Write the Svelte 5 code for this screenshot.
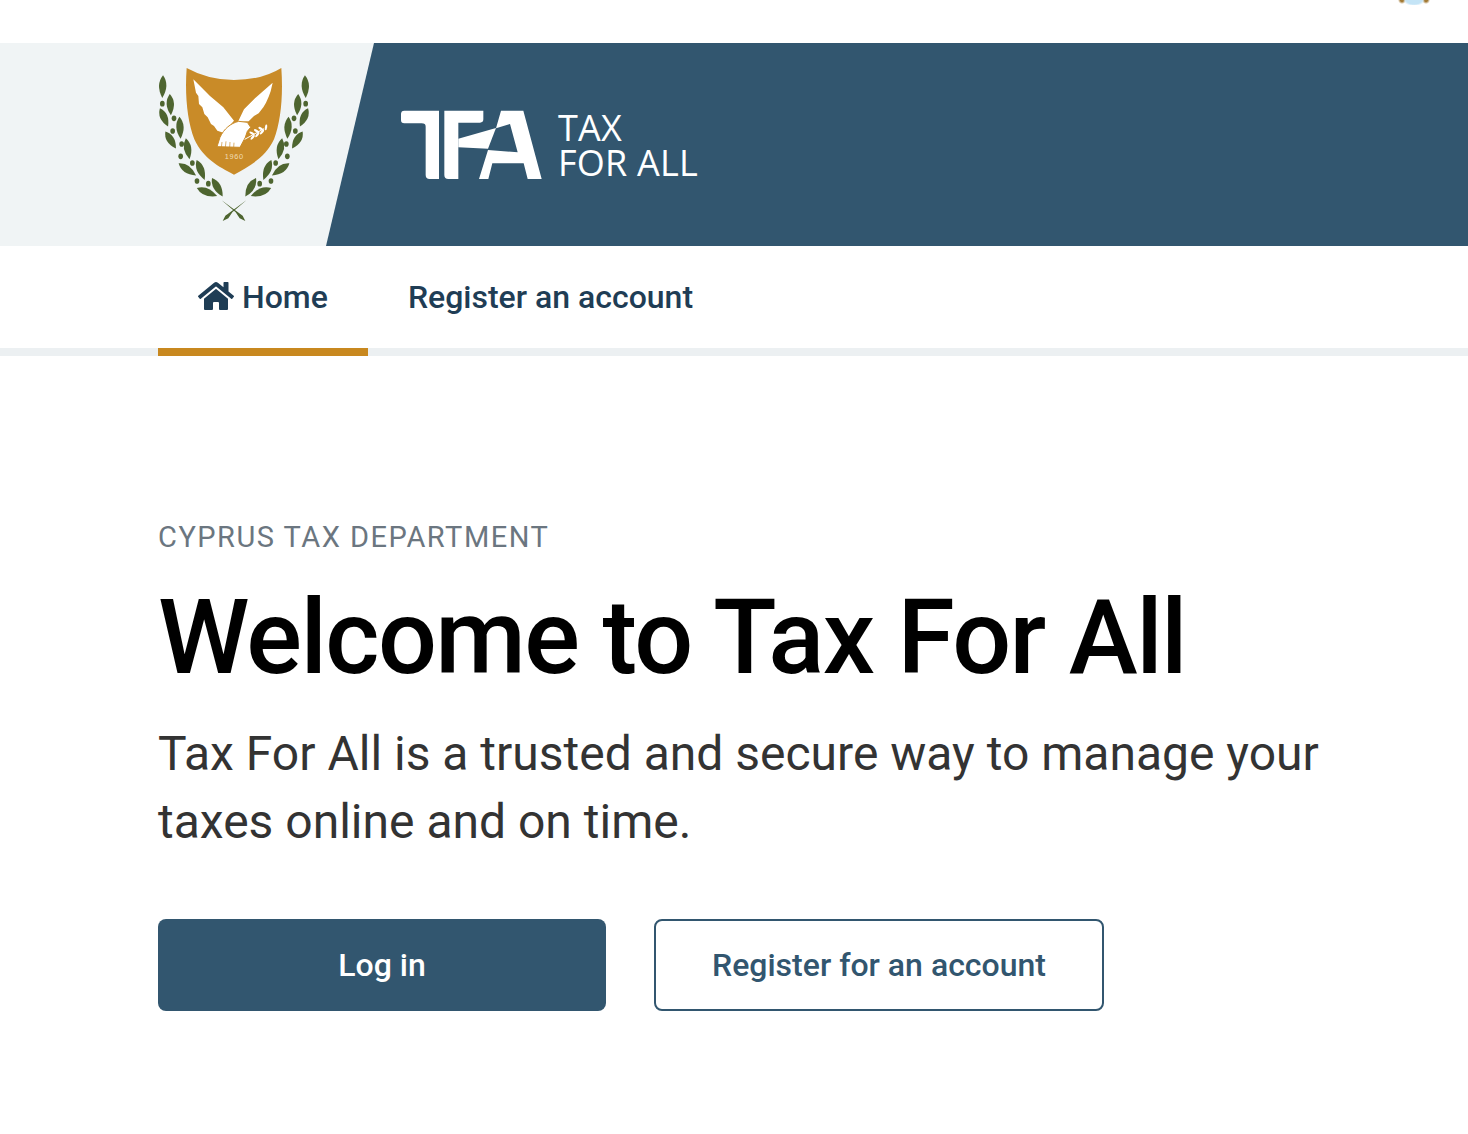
<script>
  const leaves = [
    [68, 110, 2, 34], [91, 164, -3, 32], [72, 202, -24, 30], [120, 233, -3, 33],
    [92, 270, -32, 30], [143, 296, -10, 32], [142, 358, -55, 32], [182, 360, -22, 32],
    [201, 426, -68, 33], [232, 412, -30, 32]
  ];
  const berries = [
    [67, 161], [102, 205], [98, 243], [125, 282], [122, 319], [157, 339], [171, 393], [205, 401]
  ];
  const sprigs = [
    [336, 250, -60], [350, 243, -60], [363, 236, -60], [338, 262, 40], [352, 254, 40], [366, 246, 40], [378, 232, 10]
  ];
</script>

<div class="page">
  <div class="topstrip">
    <span class="avatar"></span>
  </div>

  <header class="banner">
    <div class="crest-panel">
      <svg class="crest" viewBox="0 0 570 570" role="img" aria-label="Coat of arms of Cyprus">
        <defs>
          <g id="branch">
            {#each leaves as [x, y, r, l]}
              <path d="M0,{-l} Q22,{-l * 0.15} 0,{l} Q-22,{-l * 0.15} 0,{-l}Z" transform="translate({x} {y}) rotate({r})" fill="#4e6530" />
            {/each}
            {#each berries as [x, y]}
              <ellipse cx={x} cy={y} rx="7" ry="8.5" fill="#4e6530" />
            {/each}
            <path d="M244,450 L308,497 L316,513 L299,505 L287,487Z" fill="#4e6530" />
          </g>
        </defs>
        <path d="M140,54 Q205,90 282,90 Q365,90 424,54 C430,140 422,215 402,268 C375,325 325,350 282,374 C235,350 190,325 163,268 C142,215 134,135 140,54Z" fill="#c98b28" />
        <path d="M160,88 L210,138 L250,172 L282,212 L250,248 L232,242 L222,228 L213,222 L203,202 L193,192 L187,172 L177,162 L175,138 L168,128Z" fill="#fff" />
        <path d="M398,98 L345,145 L312,178 L294,215 L326,214 L342,198 L356,190 L370,172 L378,158 L386,140 L392,124Z" fill="#fff" />
        <path d="M296,214 C272,220 252,236 240,262 L231,290 L300,292 L316,262 L322,244 L332,232 L322,217Z" fill="#fff" stroke="#c98b28" stroke-width="3" />
        <path d="M246,276 L244,292 M258,274 L256,292 M270,276 L269,292 M282,278 L281,292" stroke="#c98b28" stroke-width="2" fill="none" />
        <path d="M314,268 L372,236" stroke="#fff" stroke-width="3" fill="none" />
        {#each sprigs as [x, y, r]}
          <ellipse cx={x} cy={y} rx="3.5" ry="9" transform="rotate({r} {x} {y})" fill="#fff" />
        {/each}
        <text x="283" y="327" class="year">1960</text>
        <use href="#branch" />
        <use href="#branch" transform="translate(564 0) scale(-1 1)" />
      </svg>
    </div>
    <div class="brand">
      <svg class="tfa" viewBox="0 0 465 270" role="img" aria-label="TFA logo">
        <path fill="#fff" d="M28,32 H132 V237 H104 Q92,237 92,225 V80 Q92,70 80,70 H28 Q18,70 18,60 V42 Q18,32 28,32Z" />
        <path fill="#fff" d="M148,32 H265 V58 Q265,68 255,68 H190 V237 H160 Q148,237 148,225Z" />
        <path fill="#fff" d="M190,116 L303,84 L279,146 L190,142Z" />
        <path fill="#fff" d="M318,32 H385 L440,237 H398 L386,190 H292 L280,237 H252 L279,150 L368,157 L345,72 L303,85Z" />
      </svg>
      <div class="wordmark">
        <span>TAX</span>
        <span>FOR ALL</span>
      </div>
    </div>
  </header>

  <nav class="nav">
    <a class="tab active" href="#home">
      <svg class="home-icon" viewBox="0 0 576 512" aria-hidden="true"><path fill="currentColor" d="M280.37 148.26L96 300.11V464a16 16 0 0 0 16 16l112.06-.29a16 16 0 0 0 15.92-16V368a16 16 0 0 1 16-16h64a16 16 0 0 1 16 16v95.64a16 16 0 0 0 16 16.05L464 480a16 16 0 0 0 16-16V300L295.67 148.26a12.19 12.19 0 0 0-15.3 0zM571.6 251.47L488 182.56V44.05a12 12 0 0 0-12-12h-56a12 12 0 0 0-12 12v72.61L318.47 43a48 48 0 0 0-61 0L4.34 251.47a12 12 0 0 0-1.6 16.9l25.5 31A12 12 0 0 0 45.15 301l235.22-193.74a12.19 12.19 0 0 1 15.3 0L530.9 301a12 12 0 0 0 16.9-1.6l25.5-31a12 12 0 0 0-1.7-16.93z"/></svg>
      Home
    </a>
    <a class="tab" href="#register">Register an account</a>
  </nav>

  <main class="hero">
    <p class="eyebrow">CYPRUS TAX DEPARTMENT</p>
    <h1>Welcome to Tax For All</h1>
    <p class="lead">Tax For All is a trusted and secure way to manage your taxes online and on time.</p>
    <div class="actions">
      <a class="btn primary" href="#login">Log in</a>
      <a class="btn secondary" href="#signup">Register for an account</a>
    </div>
  </main>
</div>

<style>
  :global(body) {
    margin: 0;
    background: #fff;
    font-family: Roboto, "Liberation Sans", sans-serif;
  }
  .page {
    width: 1468px;
    height: 1134px;
    overflow: hidden;
  }
  .topstrip {
    height: 43px;
    display: flex;
    justify-content: flex-end;
    padding-right: 38px;
  }
  .avatar {
    width: 32px;
    height: 5px;
    background:
      radial-gradient(ellipse 11px 6px at 50% 0, #c4e4f6 70%, transparent),
      radial-gradient(ellipse 4px 4px at 4px 0, #a37a35 40%, transparent),
      radial-gradient(ellipse 4px 4px at 28px 0, #a37a35 40%, transparent);
  }
  .banner {
    height: 203px;
    display: flex;
    background: #32566f;
  }
  .crest-panel {
    width: 374px;
    flex: none;
    background: #f0f4f5;
    clip-path: polygon(0 0, 100% 0, 326px 100%, 0 100%);
    padding: 7px 0 0 140px;
    box-sizing: border-box;
  }
  .crest {
    display: block;
    width: 190px;
    height: 190px;
  }
  .year {
    font: 400 22px "Liberation Sans", sans-serif;
    letter-spacing: 2px;
    fill: #f1dcb4;
    text-anchor: middle;
  }
  .brand {
    display: flex;
    align-items: flex-start;
    margin-left: 21px;
    padding-top: 57px;
    gap: 8px;
  }
  .tfa {
    display: block;
    width: 155px;
    height: 90px;
    flex: none;
  }
  .wordmark {
    display: flex;
    flex-direction: column;
    color: #fff;
    font: 400 36px/35px "Open Sans", sans-serif;
    font-stretch: 90%;
    margin-top: 10px;
    letter-spacing: 0.2px;
  }
  .nav {
    height: 102px;
    display: flex;
    padding-left: 158px;
    border-bottom: 8px solid #ecf0f2;
  }
  .tab {
    height: 110px;
    box-sizing: border-box;
    padding: 0 40px 8px;
    display: flex;
    align-items: flex-start;
    gap: 8px;
    color: #1f3d55;
    font-size: 32px;
    font-weight: 500;
    line-height: 102px;
    text-decoration: none;
    white-space: nowrap;
  }
  .tab.active {
    border-bottom: 8px solid #c8881f;
    padding-bottom: 0;
  }
  .home-icon {
    width: 36px;
    height: 32px;
    margin-top: 34px;
  }
  .hero {
    padding: 162px 0 0 158px;
  }
  .eyebrow {
    margin: 0;
    color: #6b7680;
    font-size: 29px;
    line-height: 38px;
    letter-spacing: 1.5px;
  }
  h1 {
    margin: 22px 0 0;
    color: #000;
    font-size: 104px;
    font-weight: 500;
    line-height: 120px;
    letter-spacing: -1.65px;
  }
  .lead {
    margin: 22px 0 0;
    width: 1200px;
    color: #333;
    font-size: 48px;
    line-height: 68px;
  }
  .actions {
    display: flex;
    gap: 48px;
    margin-top: 63px;
  }
  .btn {
    height: 92px;
    box-sizing: border-box;
    border-radius: 8px;
    display: flex;
    align-items: center;
    justify-content: center;
    font-size: 32px;
    font-weight: 500;
    text-decoration: none;
  }
  .primary {
    width: 448px;
    background: #32566f;
    color: #fff;
  }
  .secondary {
    width: 450px;
    border: 2px solid #32566f;
    color: #32566f;
  }
</style>
